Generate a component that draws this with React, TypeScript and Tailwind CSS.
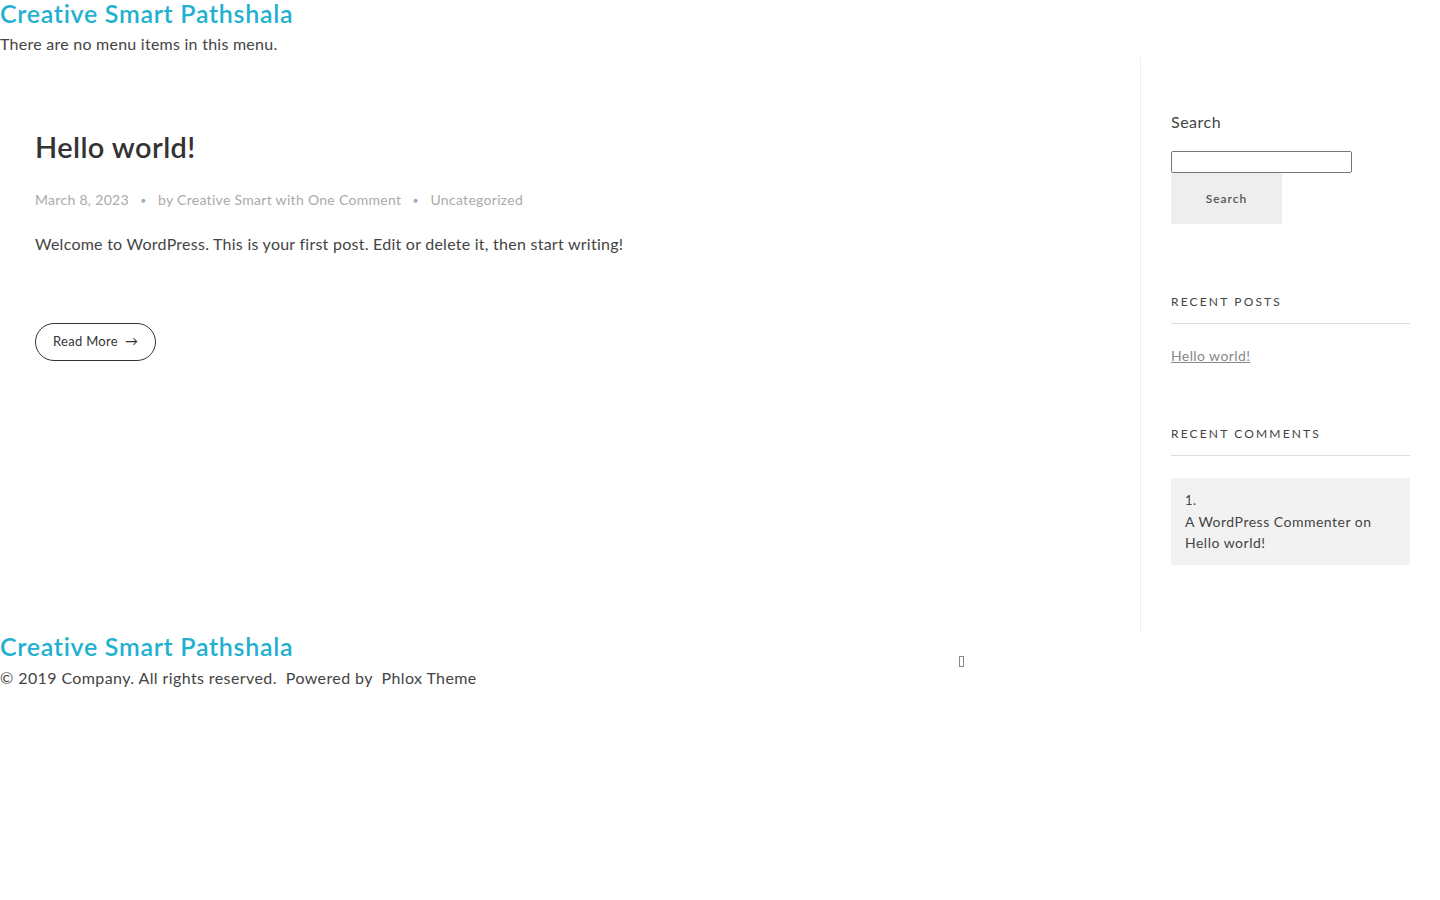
import React from 'react';

const font = { fontFamily: 'Lato, "Open Sans", sans-serif' };

const App: React.FC = () => {
  return (
    <div className="min-h-screen bg-white text-[#444] tracking-[0.25px]" style={font}>
      <header>
        <h1 className="text-[25px] leading-[26px] font-semibold tracking-[0.7px] text-[#1fb1cf]">Creative Smart Pathshala</h1>
        <p className="mt-[5px] text-[16px] leading-[26px] text-[#444]">There are no menu items in this menu.</p>
      </header>

      <div className="flex">
        <main className="flex-1 pl-[35px] pt-[73px] min-h-[576px]">
          <article>
            <h2 className="text-[29px] leading-[34px] font-semibold tracking-[0.4px] text-[#333]">Hello world!</h2>
            <div className="mt-[26px] flex items-center text-[14px] leading-[20px] tracking-[0.3px] text-[#aaa]">
              <span>March 8, 2023</span>
              <span className="mx-[12px] text-[8px]">●</span>
              <span>by Creative Smart with One Comment</span>
              <span className="mx-[12px] text-[8px]">●</span>
              <span>Uncategorized</span>
            </div>
            <p className="mt-[22px] text-[16px] leading-[24px] text-[#444]">
              Welcome to WordPress. This is your first post. Edit or delete it, then start writing!
            </p>
            <a
              href="#"
              className="mt-[67px] inline-flex items-center h-[38px] px-[17px] rounded-full border border-[#333] text-[13px] tracking-[0.3px] text-[#333]"
            >
              Read More <span className="ml-[7px]">→</span>
            </a>
          </article>
        </main>

        <aside className="w-[300px] border-l border-[#eee] pl-[30px] pr-[30px] pt-[55px]">
          <section>
            <label className="block text-[16px] leading-[20px] tracking-[0.5px] text-[#444]">Search</label>
            <input
              type="text"
              className="mt-[19px] block w-[181px] h-[22px] border border-[#767676] rounded-[2px] bg-white"
            />
            <button className="block w-[111px] h-[51px] bg-[#eee] text-[12px] font-semibold tracking-[0.08em] text-[#555]">
              Search
            </button>
          </section>

          <section className="mt-[70px]">
            <h3 className="text-[12px] leading-[16px] tracking-[0.18em] uppercase text-[#444] pb-[13px] border-b border-[#ddd]">
              Recent Posts
            </h3>
            <ul className="mt-[19px]">
              <li>
                <a href="#" className="text-[14px] leading-[20px] tracking-[0.4px] text-[#888] underline">Hello world!</a>
              </li>
            </ul>
          </section>

          <section className="mt-[59px]">
            <h3 className="text-[12px] leading-[16px] tracking-[0.18em] uppercase text-[#444] pb-[13px] border-b border-[#ddd]">
              Recent Comments
            </h3>
            <ol className="mt-[22px] bg-[#f2f2f2] px-[14px] py-[12px] text-[14px] leading-[21px] tracking-[0.5px] text-[#444]">
              <li>
                <div className="text-[13px]">1.</div>
                <div>
                  A WordPress Commenter on
                  <br />
                  Hello world!
                </div>
              </li>
            </ol>
          </section>
        </aside>
      </div>

      <footer className="flex">
        <div className="w-[940px]">
          <div className="text-[25px] leading-[26px] font-semibold tracking-[0.7px] text-[#1fb1cf]">Creative Smart Pathshala</div>
          <p className="mt-[6px] text-[16px] leading-[26px] tracking-[0.4px] text-[#444]">
            © 2019 Company. All rights reserved.&nbsp; Powered by&nbsp; Phlox Theme
          </p>
        </div>
        <div className="pt-[16px] pl-[19px]">
          <span className="inline-block w-[5px] h-[11px] border border-[#888]" />
        </div>
      </footer>
    </div>
  );
};

export default App;
